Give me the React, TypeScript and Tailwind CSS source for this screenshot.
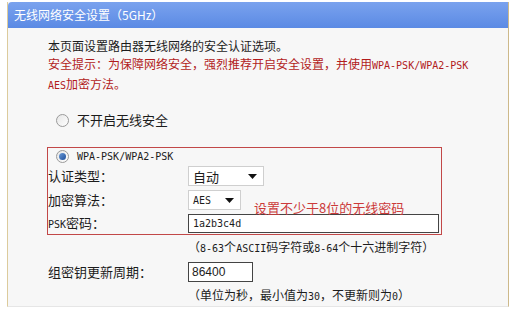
const cjk = "font-['Noto_Sans_CJK_SC',sans-serif]";
const mono = "font-['DejaVu_Sans_Mono','Noto_Sans_CJK_SC',monospace] text-[10px]";

function Radio({ checked }: { checked?: boolean }) {
  return (
    <span className="w-[13px] h-[13px] rounded-full border border-[#9a9a9a] bg-gradient-to-br from-[#e6e6e6] to-[#ffffff] flex items-center justify-center">
      {checked && <span className="w-[7px] h-[7px] rounded-full bg-gradient-to-br from-[#6a9ad8] to-[#1f4f9a]" />}
    </span>
  );
}

function Select({ label, w, asciiLabel }: { label: string; w: string; asciiLabel?: boolean }) {
  return (
    <div className={`${w} h-[20px] bg-white border border-[#cfcfcf] flex items-center justify-between pl-[4px] pr-[6px]`}>
      <span className={asciiLabel ? mono : "text-[13px] leading-none"}>{label}</span>
      <svg width="9" height="5" viewBox="0 0 9 5">
        <path d="M0 0 L9 0 L4.5 5 Z" fill="#111" />
      </svg>
    </div>
  );
}

export default function App() {
  return (
    <div className={`w-[518px] h-[313px] bg-white ${cjk} text-[12px] text-[#1c1c1c] overflow-hidden`}>
      <div className="ml-[7px] mt-[2px] w-[502px] h-[305px] border-l border-r border-b border-l-[#dccb9c] border-r-[#cdb98a] border-b-[#e6e6e6] bg-[#f7f7f7] flex flex-col">
        {/* Header */}
        <div className="h-[27px] bg-gradient-to-b from-[#7aa2ee] to-[#5b8ae4] rounded-tl-[4px] flex items-center pl-[6px] text-white text-[12px]">
          无线网络安全设置（5GHz）
        </div>

        <div className="pl-[40px] pt-[9px]">
          <div className="leading-[18px]">本页面设置路由器无线网络的安全认证选项。</div>
          <div className="leading-[18px] text-[#b21c1c]">
            安全提示：为保障网络安全，强烈推荐开启安全设置，并使用<span className={mono}>WPA-PSK/WPA2-PSK</span>
          </div>
          <div className="leading-[18px] text-[#b21c1c]">
            <span className={mono}>AES</span>加密方法。
          </div>

          <div className="mt-[15px] h-[20px] flex items-center pl-[8px] gap-[8px] text-[13px]">
            <Radio />
            <span>不开启无线安全</span>
          </div>

          {/* Red box */}
          <div className="mt-[17px] -ml-[1px] w-[395px] border border-[#c24848]">
            <div className="h-[16px] flex items-center pl-[8px] gap-[8px]">
              <Radio checked />
              <span className={mono}>WPA-PSK/WPA2-PSK</span>
            </div>
            <div className="mt-[1px] h-[22px] flex items-center">
              <span className="w-[140px] text-[13px]">认证类型：</span>
              <Select label="自动" w="w-[76px]" />
            </div>
            <div className="mt-[2px] h-[22px] flex items-center">
              <span className="w-[140px] text-[13px]">加密算法：</span>
              <Select label="AES" w="w-[53px]" asciiLabel />
              <span className="ml-[13px] translate-y-[8px] text-[13px] text-[#cc3a3a]">设置不少于8位的无线密码</span>
            </div>
            <div className="mt-[3px] h-[20px] flex items-start">
              <span className="w-[140px] text-[13px] leading-[18px]">
                <span className={mono}>PSK</span>密码：
              </span>
              <div className="w-[251px] h-[19px] bg-white border border-[#444] flex items-center pl-[4px]">
                <span className={mono}>1a2b3c4d</span>
              </div>
            </div>
          </div>

          <div className="mt-[3px] ml-[140px] leading-[18px] text-[12px]">
            （<span className={mono}>8-63</span>个<span className={mono}>ASCII</span>码字符或<span className={mono}>8-64</span>个十六进制字符）
          </div>

          <div className="mt-[4px] h-[20px] flex items-center">
            <span className="w-[140px] text-[13px]">组密钥更新周期：</span>
            <div className="w-[65px] h-[20px] bg-white border border-[#444] flex items-center pl-[3px] font-['Liberation_Sans',sans-serif] text-[12px]">
              86400
            </div>
          </div>

          <div className="mt-[4px] ml-[140px] leading-[18px] text-[12px]">
            （单位为秒，最小值为<span className={mono}>30</span>，不更新则为<span className={mono}>0</span>）
          </div>
        </div>
      </div>
    </div>
  );
}
